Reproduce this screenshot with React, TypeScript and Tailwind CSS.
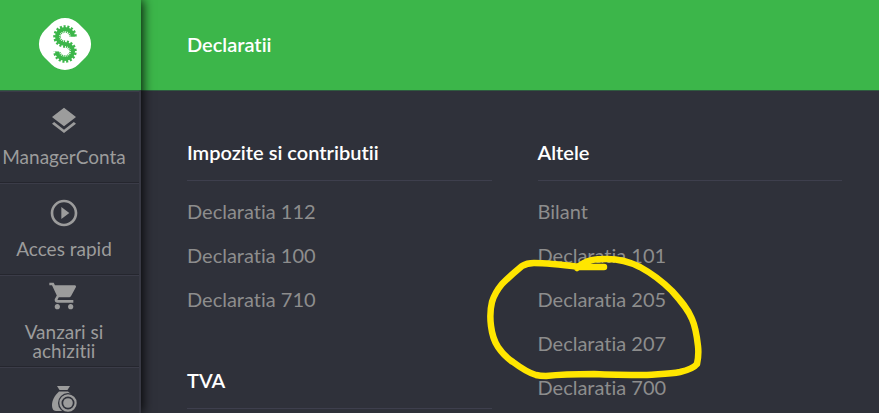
import type { ReactNode } from "react";

function Logo() {
  const s = "M73 36.5 A8 7.5 0 1 0 65 44 A8 7.5 0 1 1 57 51.5";
  return (
    <svg viewBox="37 16 56 56" className="size-14" role="img" aria-label="Logo">
      <rect x="41" y="20" width="48" height="48" rx="19" transform="rotate(45 65 44)" fill="#fff" />
      <path d={s} fill="none" stroke="#3cb64a" strokeWidth="4" />
      <path d={s} fill="none" stroke="#3cb64a" strokeWidth="7.5" strokeDasharray="1.6 1.3" />
    </svg>
  );
}

function LayersIcon() {
  return (
    <svg viewBox="0 0 24 24" className="size-8" fill="currentColor" aria-hidden="true">
      <path d="M11.99 18.54l-7.37-5.73L3 14.07l9 7 9-7-1.63-1.27-7.38 5.74zM12 16l7.36-5.73L21 9l-9-7-9 7 1.63 1.27L12 16z" />
    </svg>
  );
}

function PlayIcon() {
  return (
    <svg viewBox="0 0 24 24" className="size-8" fill="currentColor" aria-hidden="true">
      <path d="M10 16.5l6-4.5-6-4.5v9zM12 2C6.48 2 2 6.48 2 12s4.48 10 10 10 10-4.48 10-10S17.52 2 12 2zm0 18c-4.41 0-8-3.59-8-8s3.59-8 8-8 8 3.59 8 8-3.59 8-8 8z" />
    </svg>
  );
}

function CartIcon() {
  return (
    <svg viewBox="0 0 24 24" className="size-8" fill="currentColor" aria-hidden="true">
      <path d="M7 18c-1.1 0-1.99.9-1.99 2S5.9 22 7 22s2-.9 2-2-.9-2-2-2zM1 2v2h2l3.6 7.59-1.35 2.45c-.16.28-.25.61-.25.96 0 1.1.9 2 2 2h12v-2H7.42c-.14 0-.25-.11-.25-.25l.03-.12.9-1.63h7.45c.75 0 1.41-.41 1.75-1.03l3.58-6.49c.08-.14.12-.31.12-.48 0-.55-.45-1-1-1H5.21l-.94-2H1zm16 16c-1.1 0-1.99.9-1.99 2s.89 2 1.99 2 2-.9 2-2-.9-2-2-2z" />
    </svg>
  );
}

function MoneyBagIcon() {
  return (
    <svg viewBox="0 0 32 32" className="size-8" fill="currentColor" aria-hidden="true">
      <path d="M9 3h13l-2.500 4h-8z" />
      <path d="M11 8.500h9c4 3 7 8 7 12 0 5-3 7.500-7 7.500H8c-3 0-4-3-4-6 0-5 3-10 7-13.500z" />
      <circle cx="20" cy="20" r="10" fill="#2f313a" />
      <circle cx="20" cy="20" r="7.600" fill="none" stroke="currentColor" strokeWidth="2.200" />
      <circle cx="20" cy="20" r="4.800" />
    </svg>
  );
}

function NavItem({ icon, label }: { icon: ReactNode; label?: string }) {
  return (
    <li className="border-t border-t-[#3b3c48] border-b border-b-[#25262e]">
      <a
        href="#"
        aria-label={label ?? "Bani"}
        className="flex min-h-[90px] flex-col items-center justify-center gap-2.5 pr-[11px] pb-[3px] text-center text-[19px] leading-[19px]"
      >
        {icon}
        {label ? <span className="max-w-32">{label}</span> : <span className="h-[15px]" />}
      </a>
    </li>
  );
}

function Heading({ children }: { children: ReactNode }) {
  return <h2 className="border-b border-[#3e3f4d] pb-4 leading-6 font-semibold text-white">{children}</h2>;
}

function Section({ title, children }: { title: string; children?: ReactNode }) {
  return (
    <section>
      <Heading>{title}</Heading>
      <ul className="flex flex-col gap-5 pt-[18px] leading-6">{children}</ul>
    </section>
  );
}

function Item({ label, children }: { label: string; children?: ReactNode }) {
  return (
    <li className="relative">
      <a href="#">{label}</a>
      {children}
    </li>
  );
}

function Highlight() {
  return (
    <svg
      viewBox="0 0 218 126"
      className="pointer-events-none absolute -top-8 -left-[52px] h-[126px] w-[218px]"
      fill="none"
      stroke="#ffe600"
      strokeWidth="6.5"
      strokeLinecap="round"
      strokeLinejoin="round"
      aria-hidden="true"
    >
      <path d="M118 12 L94 12 C78 10 62 8 48 8 Q41 8 36 11 C30 16 22 23 16 29 C11 35 8 40 6 47 C4 55 4 63 5 71 C6 79 8 86 12 92 C16 98 21 103 27 107 C35 113 43 118 50 120 Q54 121 60 121 C78 119 94 119 108 119 C128 120 145 120 161 120 C173 119 184 119 194 117 Q207 114 211 109 Q213 100 212 91 C211 82 210 73 206 64 C202 54 195 46 186 36 C176 26 165 18 154 12 C144 7 134 4 121 4 C111 4 100 4 91 13" />
    </svg>
  );
}

export default function App() {
  return (
    <div className="flex h-screen overflow-hidden bg-[#2f313a] font-['Lato',sans-serif] text-[20px] text-[#8d8d8d] [font-variant-ligatures:none]">
      <aside className="z-10 w-[141px] shrink-0 bg-[#2f313a] shadow-[2px_0_10px_rgba(0,0,0,0.85)]">
        <div className="flex h-[90px] items-center justify-center bg-[#3cb64a] pr-[11px] pb-0.5">
          <Logo />
        </div>
        <nav className="border-t border-r-2 border-t-[#2f5a3f] border-r-[#383944]">
          <ul className="text-[#9c9c9c]">
            <NavItem icon={<LayersIcon />} label="ManagerConta" />
            <NavItem icon={<PlayIcon />} label="Acces rapid" />
            <NavItem icon={<CartIcon />} label="Vanzari si achizitii" />
            <NavItem icon={<MoneyBagIcon />} />
          </ul>
        </nav>
      </aside>
      <main className="min-w-0 flex-1">
        <header className="flex h-[90px] items-center bg-[#3cb64a] px-[46px] pb-0.5 font-semibold text-white">
          <h1>Declaratii</h1>
        </header>
        <div className="grid grid-cols-2 gap-[46px] border-t border-[#2f5a3f] pt-[49px] pr-[37px] pl-[46px]">
          <div className="flex flex-col gap-[57px]">
            <Section title="Impozite si contributii">
              <Item label="Declaratia 112" />
              <Item label="Declaratia 100" />
              <Item label="Declaratia 710" />
            </Section>
            <Section title="TVA" />
          </div>
          <Section title="Altele">
            <Item label="Bilant" />
            <Item label="Declaratia 101" />
            <Item label="Declaratia 205">
              <Highlight />
            </Item>
            <Item label="Declaratia 207" />
            <Item label="Declaratia 700" />
          </Section>
        </div>
      </main>
    </div>
  );
}
